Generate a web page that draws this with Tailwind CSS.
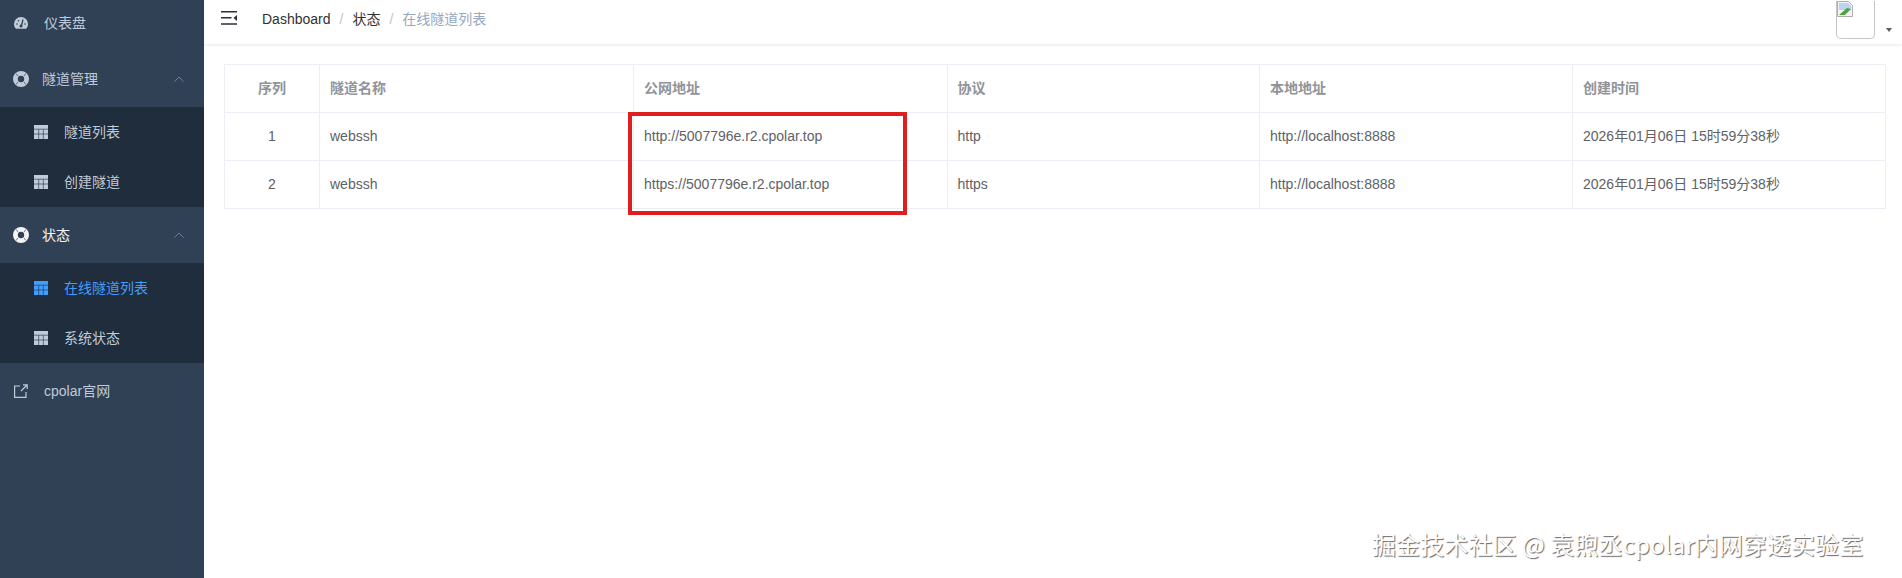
<!DOCTYPE html>
<html lang="zh">
<head>
<meta charset="utf-8">
<script src="https://cdn.jsdelivr.net/npm/@tailwindcss/browser@4"></script>
<title>在线隧道列表</title>
</head>
<body class="bg-white overflow-hidden font-['Liberation_Sans','Noto_Sans_CJK_SC',sans-serif]">
<div class="relative flex h-[578px] w-[1902px] overflow-hidden">
  <aside class="w-[204px] shrink-0 h-full bg-[#304156] overflow-hidden text-[14px] text-[#bfcbd9]">
    <div class="-mt-[5px]">
      <div class="h-[56px] flex items-center pl-[14px]">
        <svg class="w-[14px] h-[12px] mr-[16px]" viewBox="0 0 14 12"><path fill="#bfcbd9" d="M7 0a7 7 0 0 0-7 7c0 1.600.5 3 1.400 4.200.2.300.5.500.9.500h9.400c.4 0 .7-.2.900-.5C13.500 10 14 8.600 14 7a7 7 0 0 0-7-7z"/><path stroke="#304156" stroke-width="1.300" fill="none" d="M7.500 8.500 9 2.500"/><circle cx="7" cy="9" r="1.500" fill="#304156"/><circle cx="3" cy="7" r=".8" fill="#304156"/><circle cx="4.500" cy="3.800" r=".8" fill="#304156"/><circle cx="11" cy="7" r=".8" fill="#304156"/></svg>
        <span>仪表盘</span>
      </div>
      <div class="h-[56px] flex items-center pl-[13px] pr-[20px]">
        <svg class="w-[16px] h-[16px] mr-[13px]" viewBox="0 0 16 16"><circle cx="8" cy="8" r="8" fill="#bfcbd9"/><circle cx="8" cy="8" r="3.200" fill="#304156"/><path stroke="#304156" stroke-width=".7" d="M3 2.500l2 2.500M13 2.500l-2 2.500M3 13.500l2-2.500M13 13.500l-2-2.500"/></svg>
        <span>隧道管理</span>
        <svg class="ml-auto w-[10px] h-[6px]" viewBox="0 0 10 6"><path d="M.5 5.500 5 1l4.500 4.500" fill="none" stroke="#6f7f92" stroke-width="1"/></svg>
      </div>
      <div class="bg-[#1f2d3d]">
        <div class="h-[50px] flex items-center pl-[34px]">
          <svg class="w-[14px] h-[14px] mr-[16px]" viewBox="0 0 14 14"><path fill="#bfcbd9" d="M0 0h14v14H0z"/><path stroke="#1f2d3d" stroke-width=".6" d="M0 4.200h14M0 9h14M4.700 4.200V14M9.300 4.200V14"/></svg>
          <span>隧道列表</span>
        </div>
        <div class="h-[50px] flex items-center pl-[34px]">
          <svg class="w-[14px] h-[14px] mr-[16px]" viewBox="0 0 14 14"><path fill="#bfcbd9" d="M0 0h14v14H0z"/><path stroke="#1f2d3d" stroke-width=".6" d="M0 4.200h14M0 9h14M4.700 4.200V14M9.300 4.200V14"/></svg>
          <span>创建隧道</span>
        </div>
      </div>
      <div class="h-[56px] flex items-center pl-[13px] pr-[20px] text-[#f4f4f5]">
        <svg class="w-[16px] h-[16px] mr-[13px]" viewBox="0 0 16 16"><circle cx="8" cy="8" r="8" fill="#f4f4f5"/><circle cx="8" cy="8" r="3.200" fill="#304156"/><path stroke="#304156" stroke-width=".7" d="M3 2.500l2 2.500M13 2.500l-2 2.500M3 13.500l2-2.500M13 13.500l-2-2.500"/></svg>
        <span>状态</span>
        <svg class="ml-auto w-[10px] h-[6px]" viewBox="0 0 10 6"><path d="M.5 5.500 5 1l4.500 4.500" fill="none" stroke="#6f7f92" stroke-width="1"/></svg>
      </div>
      <div class="bg-[#1f2d3d]">
        <div class="h-[50px] flex items-center pl-[34px] text-[#409eff]">
          <svg class="w-[14px] h-[14px] mr-[16px]" viewBox="0 0 14 14"><path fill="#409eff" d="M0 0h14v14H0z"/><path stroke="#1f2d3d" stroke-width=".6" d="M0 4.200h14M0 9h14M4.700 4.200V14M9.300 4.200V14"/></svg>
          <span>在线隧道列表</span>
        </div>
        <div class="h-[50px] flex items-center pl-[34px]">
          <svg class="w-[14px] h-[14px] mr-[16px]" viewBox="0 0 14 14"><path fill="#bfcbd9" d="M0 0h14v14H0z"/><path stroke="#1f2d3d" stroke-width=".6" d="M0 4.200h14M0 9h14M4.700 4.200V14M9.300 4.200V14"/></svg>
          <span>系统状态</span>
        </div>
      </div>
      <div class="h-[56px] flex items-center pl-[14px]">
        <svg class="w-[14px] h-[14px] mr-[16px]" viewBox="0 0 14 14"><path fill="none" stroke="#bfcbd9" stroke-width="1.200" d="M6 2H.6v11.400H12V8M7 7l6-6M9 .8h4.200V5"/></svg>
        <span>cpolar官网</span>
      </div>
    </div>
  </aside>
  <main class="flex-1 min-w-0">
    <header class="h-[44px] flex items-start shadow-[0_1px_3px_rgba(0,21,41,0.10)] relative">
      <svg class="w-[16px] h-[14px] ml-[17px] mt-[11px]" viewBox="0 0 16 14"><path fill="#2b2f36" d="M0 0h16v1.500H0zM0 6h10.500v1.500H0zM0 12.300h16v1.500H0zM16 4v6l-3.500-3z"/></svg>
      <nav class="ml-[25px] mt-[10px] text-[14px] leading-[18px] flex items-center">
        <span class="text-[#303133]">Dashboard</span>
        <span class="text-[#c0c4cc] mx-[9px]">/</span>
        <span class="text-[#303133]">状态</span>
        <span class="text-[#c0c4cc] mx-[9px]">/</span>
        <span class="text-[#97a8be]">在线隧道列表</span>
      </nav>
      <div class="ml-auto relative w-[52px] h-[39px] mr-[14px]">
        <div class="w-[39px] h-[38px] rounded-b-[5px] border-x border-b border-[#c4c4c4]">
          <svg class="w-[16px] h-[16px] mt-px" viewBox="0 0 16 16"><path fill="#f4f4f4" stroke="#9a9a9a" stroke-width=".8" d="M.5.500h11l4 4v11H.500z"/><path fill="#b9d3f2" d="M2 2h9l3 3v4H2z"/><path fill="#4fa53d" d="M2 14l8-7 4 1-6 6z"/></svg>
        </div>
        <span class="absolute left-[50px] top-[28px] w-0 h-0 border-x-[3.500px] border-x-transparent border-t-[4px] border-t-[#5a5e66]"></span>
      </div>
    </header>
    <div class="pl-[20px] pt-[20px] pr-[16px] relative">
      <table class="table-fixed border-collapse w-[1661px] text-[14px] text-[#606266]">
        <colgroup>
          <col class="w-[95px]"><col class="w-[314px]"><col class="w-[313.5px]"><col class="w-[312.5px]"><col class="w-[313px]"><col class="w-[313px]">
        </colgroup>
        <thead>
          <tr class="h-[48px] text-[#909399]">
            <th class="border border-[#ebeef5] text-center font-bold">序列</th>
            <th class="border border-[#ebeef5] text-left font-bold pl-[10px]">隧道名称</th>
            <th class="border border-[#ebeef5] text-left font-bold pl-[10px]">公网地址</th>
            <th class="border border-[#ebeef5] text-left font-bold pl-[10px]">协议</th>
            <th class="border border-[#ebeef5] text-left font-bold pl-[10px]">本地地址</th>
            <th class="border border-[#ebeef5] text-left font-bold pl-[10px]">创建时间</th>
          </tr>
        </thead>
        <tbody>
          <tr class="h-[48px]">
            <td class="border border-[#ebeef5] text-center">1</td>
            <td class="border border-[#ebeef5] pl-[10px]">webssh</td>
            <td class="border border-[#ebeef5] pl-[10px]">http://5007796e.r2.cpolar.top</td>
            <td class="border border-[#ebeef5] pl-[10px]">http</td>
            <td class="border border-[#ebeef5] pl-[10px]">http://localhost:8888</td>
            <td class="border border-[#ebeef5] pl-[10px]">2026年01月06日 15时59分38秒</td>
          </tr>
          <tr class="h-[48px]">
            <td class="border border-[#ebeef5] text-center">2</td>
            <td class="border border-[#ebeef5] pl-[10px]">webssh</td>
            <td class="border border-[#ebeef5] pl-[10px]">https://5007796e.r2.cpolar.top</td>
            <td class="border border-[#ebeef5] pl-[10px]">https</td>
            <td class="border border-[#ebeef5] pl-[10px]">http://localhost:8888</td>
            <td class="border border-[#ebeef5] pl-[10px]">2026年01月06日 15时59分38秒</td>
          </tr>
        </tbody>
      </table>
    </div>
  </main>
  <div class="absolute left-[628px] top-[112px] w-[279px] h-[103px] border-[4px] border-[#e01e1e]"></div>
  <div class="absolute left-[1372px] top-[527px] font-['Noto_Sans_CJK_SC',sans-serif] text-[24px] leading-[34px] tracking-[0.1px] whitespace-nowrap text-white [text-shadow:1px_1px_1px_#666]">掘金技术社区 @ 袁煦丞cpolar内网穿透实验室</div>
</div>
</body>
</html>
